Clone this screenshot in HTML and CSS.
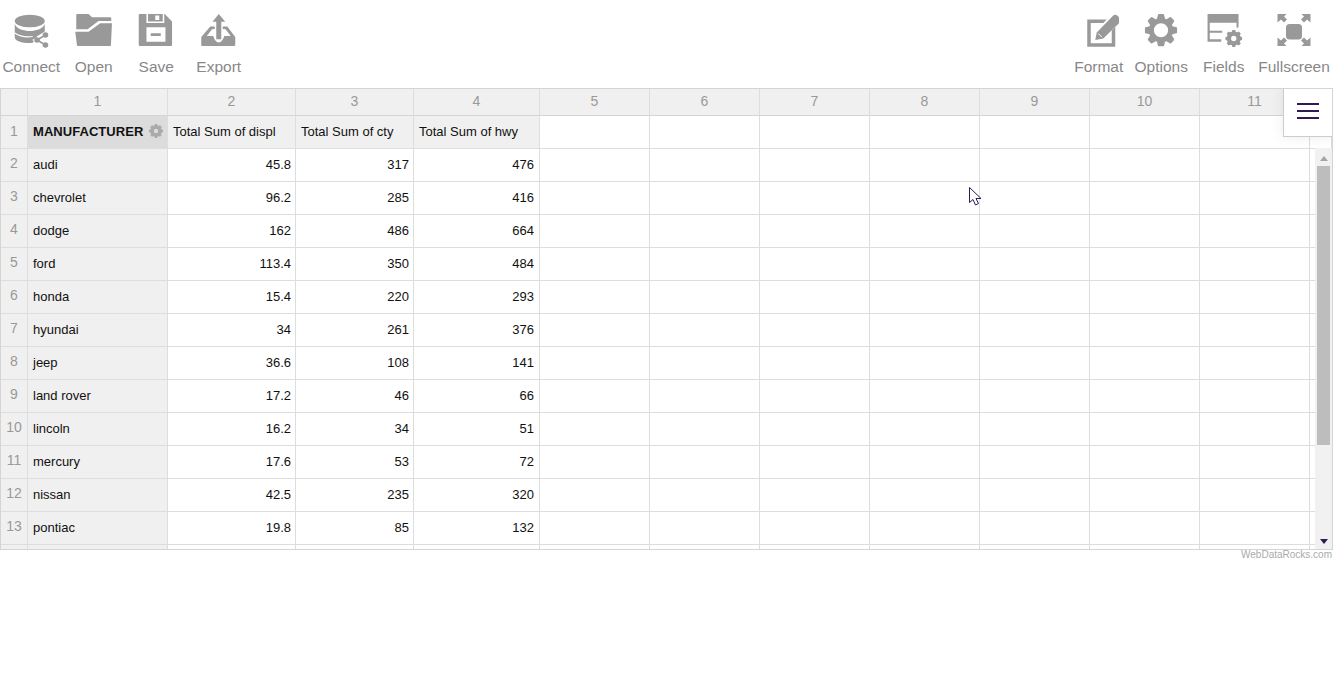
FILE: index.html
```html
<!DOCTYPE html>
<html lang="en">
<head>
<meta charset="utf-8">
<title>WebDataRocks</title>
<link rel="stylesheet" href="styles.css">
</head>
<body>
<svg class="defs" width="0" height="0" aria-hidden="true">
  <symbol id="gear" viewBox="0 0 32 32">
    <circle cx="16" cy="16" r="9.500" fill="none" stroke="currentColor" stroke-width="5"/>
    <g fill="currentColor">
      <path id="tooth" d="M12 5 13 .8Q13.200 0 14 0h4q.8 0 1 .8L20 5z"/>
      <use href="#tooth" transform="rotate(45 16 16)"/>
      <use href="#tooth" transform="rotate(90 16 16)"/>
      <use href="#tooth" transform="rotate(135 16 16)"/>
      <use href="#tooth" transform="rotate(180 16 16)"/>
      <use href="#tooth" transform="rotate(225 16 16)"/>
      <use href="#tooth" transform="rotate(270 16 16)"/>
      <use href="#tooth" transform="rotate(315 16 16)"/>
    </g>
  </symbol>
  <symbol id="gear-small" viewBox="0 0 32 32">
    <circle cx="16" cy="16" r="9" fill="none" stroke="currentColor" stroke-width="8"/>
    <g fill="currentColor">
      <use href="#tooth"/>
      <use href="#tooth" transform="rotate(45 16 16)"/>
      <use href="#tooth" transform="rotate(90 16 16)"/>
      <use href="#tooth" transform="rotate(135 16 16)"/>
      <use href="#tooth" transform="rotate(180 16 16)"/>
      <use href="#tooth" transform="rotate(225 16 16)"/>
      <use href="#tooth" transform="rotate(270 16 16)"/>
      <use href="#tooth" transform="rotate(315 16 16)"/>
    </g>
  </symbol>
</svg>
<header class="toolbar">
  <div class="tool-group">
    <div class="tool">
      <svg class="tool-icon" viewBox="11.250 13 40 36">
        <path d="M15 24C17 29 24 31 30 31S43 29 45 24V31.500L37 36.500 33 42.700Q31.500 43 30 43C22 43 15 41 15 37z"/>
        <path d="M15 33C20 36.500 26 37.500 33 36.500" fill="none" stroke="#fff" stroke-width="1.200"/>
        <ellipse cx="30" cy="21" rx="15" ry="6.300"/>
        <path d="M45.700 35 37.300 40 45.700 45" fill="none" stroke="#fff" stroke-width="5"/>
        <path d="M45.700 35 37.300 40 45.700 45" fill="none" stroke="#999" stroke-width="1.600"/>
        <circle cx="45.700" cy="35" r="2.800"/><circle cx="37.300" cy="40" r="2.800"/><circle cx="45.700" cy="45" r="2.800"/>
      </svg>
      <span class="tool-label">Connect</span>
    </div>
    <div class="tool">
      <svg class="tool-icon" viewBox="73.750 13 40 36">
        <path d="M76 15Q76 14 77 14H88.300L91.700 17.300H110Q111 17.300 111 18.300V21H98.300L87.300 29.300H76z"/>
        <path d="M75 31.700H88.300L100 23.300H111.700L110.700 45Q110.700 46 109.700 46H77.700Q76.700 46 76.700 45z"/>
      </svg>
      <span class="tool-label">Open</span>
    </div>
    <div class="tool">
      <svg class="tool-icon" viewBox="136.250 13 40 36">
        <path fill-rule="evenodd" d="M140 14H165L172.300 21.500V45Q172.300 46 171.300 46H140Q139 46 139 45V15Q139 14 140 14ZM146.700 14V23H164.500V14H163V21.500H148.300V14ZM155.500 15.500V20H159.500V15.500ZM146.700 27.300V41.700H165.700V27.300ZM151 33.300H161V36H151Z"/>
      </svg>
      <span class="tool-label">Save</span>
    </div>
    <div class="tool">
      <svg class="tool-icon" viewBox="198.750 13 40 36">
        <path d="M218.500 14 225 21.700H221V39.300H216V21.700H212.300z"/>
        <path d="M201 37 210 26.500H214.500V29H212L206.500 36H213C214 39.500 216 42.500 218.500 42.500S223 39.500 224 36H230.500L225 29H222.500V26.500H227L235 37V45Q235 46 234 46H202Q201 46 201 45z"/>
      </svg>
      <span class="tool-label">Export</span>
    </div>
  </div>
  <div class="tool-group">
    <div class="tool">
      <svg class="tool-icon" viewBox="1078.750 13 40 36">
        <path d="M1087 19.500H1106.500L1103 23H1090.500V43.300H1111.500V30.500L1115 27V46.700H1087z"/>
        <path d="M1095 40 1096.500 32.500 1113 15.500Q1115 14 1117 15.500L1120 18.500Q1121 20.500 1120 22L1103 38.500z"/>
        <path d="M1098 33.500 1101.500 37" fill="none" stroke="#fff"/>
      </svg>
      <span class="tool-label">Format</span>
    </div>
    <div class="tool">
      <svg class="tool-icon" viewBox="1141.250 13 40 36"><use href="#gear" x="1145" y="14" width="32.500" height="32.500"/></svg>
      <span class="tool-label">Options</span>
    </div>
    <div class="tool">
      <svg class="tool-icon" viewBox="1203.750 13 40 36">
        <path d="M1207.300 14H1238.300V27.500H1236.300V22.700H1209.500V30.700H1222V32.700H1209.500V39.300H1221V41.700H1207.300z"/>
        <use href="#gear-small" x="1225" y="30" width="17" height="17"/>
      </svg>
      <span class="tool-label">Fields</span>
    </div>
    <div class="tool tool-wide">
      <svg class="tool-icon" viewBox="1274 13 40 36">
        <rect x="1286" y="24" width="16" height="15.500" rx="3.500"/>
        <path d="M1277.500 14H1286.500L1284 16.500 1287 19.500 1284 22.500 1281 19.500 1277.500 22.500zM1310.500 14H1301.500L1304 16.500 1301 19.500 1304 22.500 1307 19.500 1310.500 22.500zM1277.500 46H1286.500L1284 43.500 1287 40.500 1284 37.500 1281 40.500 1277.500 37.500zM1310.500 46H1301.500L1304 43.500 1301 40.500 1304 37.500 1307 40.500 1310.500 37.500z"/>
      </svg>
      <span class="tool-label">Fullscreen</span>
    </div>
  </div>
</header>

<main class="sheet">
  <div class="row row-head">
    <div class="cell corner"></div><div class="cell">1</div><div class="cell">2</div><div class="cell">3</div><div class="cell">4</div><div class="cell">5</div><div class="cell">6</div><div class="cell">7</div><div class="cell">8</div><div class="cell">9</div><div class="cell">10</div><div class="cell">11</div><div class="cell"></div>
  </div>
  <div class="row row-title">
    <div class="cell num">1</div>
    <div class="cell dim"><b>MANUFACTURER</b><svg class="dim-gear"><use href="#gear-small"/></svg></div>
    <div class="cell meas">Total Sum of displ</div><div class="cell meas">Total Sum of cty</div><div class="cell meas">Total Sum of hwy</div>
    <div class="cell"></div><div class="cell"></div><div class="cell"></div><div class="cell"></div><div class="cell"></div><div class="cell"></div><div class="cell"></div><div class="cell"></div>
  </div>
  <div class="row"><div class="cell num">2</div><div class="cell lab">audi</div><div class="cell val">45.8</div><div class="cell val">317</div><div class="cell val">476</div><div class="cell"></div><div class="cell"></div><div class="cell"></div><div class="cell"></div><div class="cell"></div><div class="cell"></div><div class="cell"></div><div class="cell"></div></div>
  <div class="row"><div class="cell num">3</div><div class="cell lab">chevrolet</div><div class="cell val">96.2</div><div class="cell val">285</div><div class="cell val">416</div><div class="cell"></div><div class="cell"></div><div class="cell"></div><div class="cell"></div><div class="cell"></div><div class="cell"></div><div class="cell"></div><div class="cell"></div></div>
  <div class="row"><div class="cell num">4</div><div class="cell lab">dodge</div><div class="cell val">162</div><div class="cell val">486</div><div class="cell val">664</div><div class="cell"></div><div class="cell"></div><div class="cell"></div><div class="cell"></div><div class="cell"></div><div class="cell"></div><div class="cell"></div><div class="cell"></div></div>
  <div class="row"><div class="cell num">5</div><div class="cell lab">ford</div><div class="cell val">113.4</div><div class="cell val">350</div><div class="cell val">484</div><div class="cell"></div><div class="cell"></div><div class="cell"></div><div class="cell"></div><div class="cell"></div><div class="cell"></div><div class="cell"></div><div class="cell"></div></div>
  <div class="row"><div class="cell num">6</div><div class="cell lab">honda</div><div class="cell val">15.4</div><div class="cell val">220</div><div class="cell val">293</div><div class="cell"></div><div class="cell"></div><div class="cell"></div><div class="cell"></div><div class="cell"></div><div class="cell"></div><div class="cell"></div><div class="cell"></div></div>
  <div class="row"><div class="cell num">7</div><div class="cell lab">hyundai</div><div class="cell val">34</div><div class="cell val">261</div><div class="cell val">376</div><div class="cell"></div><div class="cell"></div><div class="cell"></div><div class="cell"></div><div class="cell"></div><div class="cell"></div><div class="cell"></div><div class="cell"></div></div>
  <div class="row"><div class="cell num">8</div><div class="cell lab">jeep</div><div class="cell val">36.6</div><div class="cell val">108</div><div class="cell val">141</div><div class="cell"></div><div class="cell"></div><div class="cell"></div><div class="cell"></div><div class="cell"></div><div class="cell"></div><div class="cell"></div><div class="cell"></div></div>
  <div class="row"><div class="cell num">9</div><div class="cell lab">land rover</div><div class="cell val">17.2</div><div class="cell val">46</div><div class="cell val">66</div><div class="cell"></div><div class="cell"></div><div class="cell"></div><div class="cell"></div><div class="cell"></div><div class="cell"></div><div class="cell"></div><div class="cell"></div></div>
  <div class="row"><div class="cell num">10</div><div class="cell lab">lincoln</div><div class="cell val">16.2</div><div class="cell val">34</div><div class="cell val">51</div><div class="cell"></div><div class="cell"></div><div class="cell"></div><div class="cell"></div><div class="cell"></div><div class="cell"></div><div class="cell"></div><div class="cell"></div></div>
  <div class="row"><div class="cell num">11</div><div class="cell lab">mercury</div><div class="cell val">17.6</div><div class="cell val">53</div><div class="cell val">72</div><div class="cell"></div><div class="cell"></div><div class="cell"></div><div class="cell"></div><div class="cell"></div><div class="cell"></div><div class="cell"></div><div class="cell"></div></div>
  <div class="row"><div class="cell num">12</div><div class="cell lab">nissan</div><div class="cell val">42.5</div><div class="cell val">235</div><div class="cell val">320</div><div class="cell"></div><div class="cell"></div><div class="cell"></div><div class="cell"></div><div class="cell"></div><div class="cell"></div><div class="cell"></div><div class="cell"></div></div>
  <div class="row"><div class="cell num">13</div><div class="cell lab">pontiac</div><div class="cell val">19.8</div><div class="cell val">85</div><div class="cell val">132</div><div class="cell"></div><div class="cell"></div><div class="cell"></div><div class="cell"></div><div class="cell"></div><div class="cell"></div><div class="cell"></div><div class="cell"></div></div>
  <div class="row row-cut"><div class="cell num"></div><div class="cell lab"></div><div class="cell"></div><div class="cell"></div><div class="cell"></div><div class="cell"></div><div class="cell"></div><div class="cell"></div><div class="cell"></div><div class="cell"></div><div class="cell"></div><div class="cell"></div><div class="cell"></div></div>

  <div class="scrollbar">
    <span class="arrow arrow-up"></span>
    <span class="thumb"></span>
    <span class="arrow arrow-down"></span>
  </div>
  <button class="menu-btn" type="button" aria-label="Menu"><span></span><span></span><span></span></button>
  <svg class="cursor" width="14" height="20" viewBox="0 0 14 20"><path d="M.5.500v15l3.500-3 2.500 5.500 3-1.500-2.500-5h5z" fill="#fff" stroke="#2f1a56"/></svg>
</main>
<div class="credit">WebDataRocks.com</div>
</body>
</html>
```
FILE: styles.css
```css
* { box-sizing: border-box; }
html, body { margin: 0; background: #fff; }
body { font-family: "Liberation Sans", Arial, sans-serif; color: #111; }
.defs { position: absolute; }

.toolbar {
  height: 88px;
  padding: 13px 11px 0 0;
  display: flex;
  justify-content: space-between;
}
.tool-group { display: flex; }
.tool {
  width: 62.500px;
  display: flex;
  flex-direction: column;
  align-items: center;
  gap: 9px;
}
.tool-wide { width: 72px; margin-left: 3px; }
.tool-icon { width: 40px; height: 36px; fill: #999; color: #999; }
.tool-label { font-size: 15.500px; line-height: 17px; color: #888; white-space: nowrap; }

.sheet {
  position: relative;
  width: 1333px;
  height: 462px;
  border: 1px solid #d4d4d4;
  overflow: hidden;
}
.row {
  display: grid;
  grid-template-columns: 27px 140px 128px 118px 126px repeat(7, 110px) 1fr;
  height: 33px;
}
.cell {
  border-right: 1px solid #ddd;
  border-bottom: 1px solid #ddd;
  font-size: 13px;
  display: flex;
  align-items: center;
  white-space: nowrap;
  padding: 0 5px 2px;
}
.row-head { height: 27px; background: #f0f0f0; }
.row-head .cell { justify-content: center; color: #999; font-size: 14px; padding: 0 0 3px; border-bottom-color: #d4d4d4; }
.row-head .cell:last-child { border-right: 0; }
.corner { background: #f0f0f0; }
.num { justify-content: center; background: #f0f0f0; color: #999; font-size: 14px; padding: 0 0 5px; }
.row-title .num { padding-bottom: 3px; }
.lab { background: #f0f0f0; }
.dim { background: #dcdcdc; gap: 6px; padding: 0 0 2px 5px; }
.dim b { letter-spacing: .05px; }
.dim-gear { width: 14px; height: 14px; color: #aaa; }
.meas { background: #f0f0f0; padding: 0 0 2px 5px; }
.val { justify-content: flex-end; padding-right: 4px; }
.val:nth-child(5) { padding-right: 5px; }
.row-cut { height: 4px; }
.row-cut .cell { border-bottom: 0; padding: 0; }

.scrollbar {
  position: absolute;
  right: 0;
  top: 59px;
  width: 17px;
  height: 401px;
  background: #f1f1f1;
  display: flex;
  flex-direction: column;
  align-items: center;
  padding-top: 8px;
}
.thumb { width: 13px; height: 279px; margin: 5px 0 94px; background: #bdbdbd; }
.arrow { width: 0; height: 0; border-left: 4px solid transparent; border-right: 4px solid transparent; }
.arrow-up { border-bottom: 5px solid #a9a2ab; }
.arrow-down { border-top: 5px solid #2f1a56; }

.menu-btn {
  position: absolute;
  right: -1px;
  top: -1px;
  width: 50px;
  height: 49px;
  padding: 0 0 3px;
  background: #fff;
  border: 1px solid #ccc;
  box-shadow: 0 0 12px rgba(0,0,0,.08);
  display: flex;
  flex-direction: column;
  align-items: center;
  justify-content: center;
  gap: 5px;
}
.menu-btn span { width: 22px; height: 2px; background: #2f1a56; }
.cursor { position: absolute; left: 968px; top: 98px; }

.credit {
  width: 1332px;
  text-align: right;
  font-size: 10px;
  line-height: 9px;
  color: #aaa;
}
```
